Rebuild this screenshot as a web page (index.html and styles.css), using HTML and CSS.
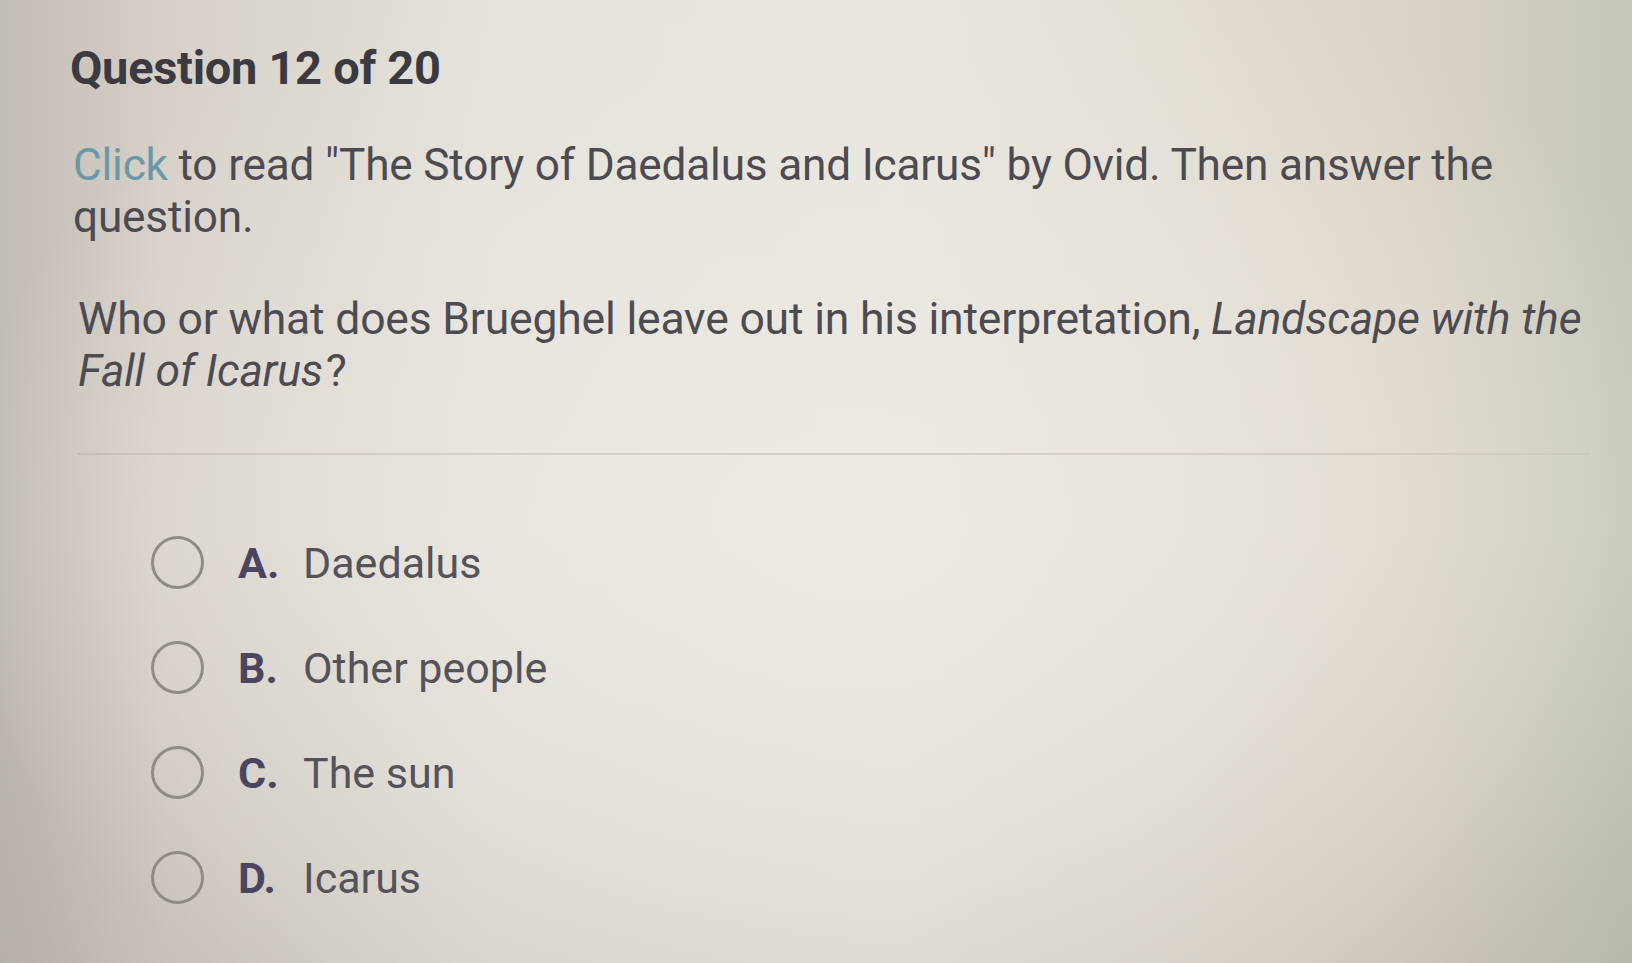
FILE: index.html
```html
<!DOCTYPE html>
<html lang="en">
<head>
<meta charset="utf-8">
<title>Question 12 of 20</title>
<link rel="stylesheet" href="styles.css">
</head>
<body>
<main class="page">
  <h1 class="title">Question 12 of 20</h1>
  <p class="intro"><span class="link">Click</span> to read "The Story of Daedalus and Icarus" by Ovid. Then answer the question.</p>
  <p class="prompt">Who or what does Brueghel leave out in his interpretation, <em>Landscape with the Fall of Icarus</em>?</p>
  <hr class="divider">
  <ul class="options">
    <li class="option"><span class="radio"></span><span class="letter">A.</span><span class="answer">Daedalus</span></li>
    <li class="option"><span class="radio"></span><span class="letter">B.</span><span class="answer">Other people</span></li>
    <li class="option"><span class="radio"></span><span class="letter">C.</span><span class="answer">The sun</span></li>
    <li class="option"><span class="radio"></span><span class="letter">D.</span><span class="answer">Icarus</span></li>
  </ul>
</main>
</body>
</html>
```
FILE: styles.css
```css
html, body {
  margin: 0;
  padding: 0;
  height: 100%;
}
body {
  font-family: Roboto, "Liberation Sans", Arial, sans-serif;
  color: #4d4b52;
  background:
    radial-gradient(ellipse 55% 65% at 52% 55%, rgba(238,234,228,0.9) 0%, rgba(236,232,226,0.5) 55%, rgba(236,232,226,0) 100%),
    linear-gradient(180deg, rgba(0,0,0,0) 55%, rgba(70,62,55,0.10) 100%),
    linear-gradient(90deg, #c1bcb4 0%, #d6d0c8 10%, #e4e2da 30%, #e8e6df 55%, #e2ddd2 72%, #dbd3c6 86%, #c5c8bb 100%);
  overflow: hidden;
}
.page {
  padding: 40px 20px 0 70px;
}
.title {
  margin: 0;
  font-size: 47px;
  line-height: 56px;
  font-weight: 700;
  color: #3b3a41;
  letter-spacing: -0.3px;
}
.intro {
  margin: 43px 0 0 3px;
  font-size: 44.2px;
  line-height: 52px;
  letter-spacing: -0.2px;
}
.link {
  color: #6b98a6;
}
.prompt {
  margin: 50px 0 0 8px;
  font-size: 44.5px;
  line-height: 52px;
  letter-spacing: -0.2px;
}
.prompt em {
  font-style: italic;
  padding-right: 3px;
}
.divider {
  margin: 56px 22px 0 8px;
  border: 0;
  height: 2px;
  background: linear-gradient(90deg, rgba(190,180,170,0.5), rgba(205,200,190,0.7) 40%, rgba(200,190,180,0.6) 80%, rgba(190,185,175,0.3));
}
.options {
  list-style: none;
  margin: 55px 0 0 0;
  padding: 0 0 0 81px;
}
.option {
  display: flex;
  align-items: center;
  height: 105px;
  font-size: 43px;
}
.radio {
  width: 47px;
  height: 47px;
  border: 3px solid #8f8c88;
  border-radius: 50%;
  flex: none;
}
.letter {
  margin-left: 34px;
  width: 65px;
  font-weight: 700;
  color: #4a4660;
}
.answer {
  color: #55535a;
}
```
